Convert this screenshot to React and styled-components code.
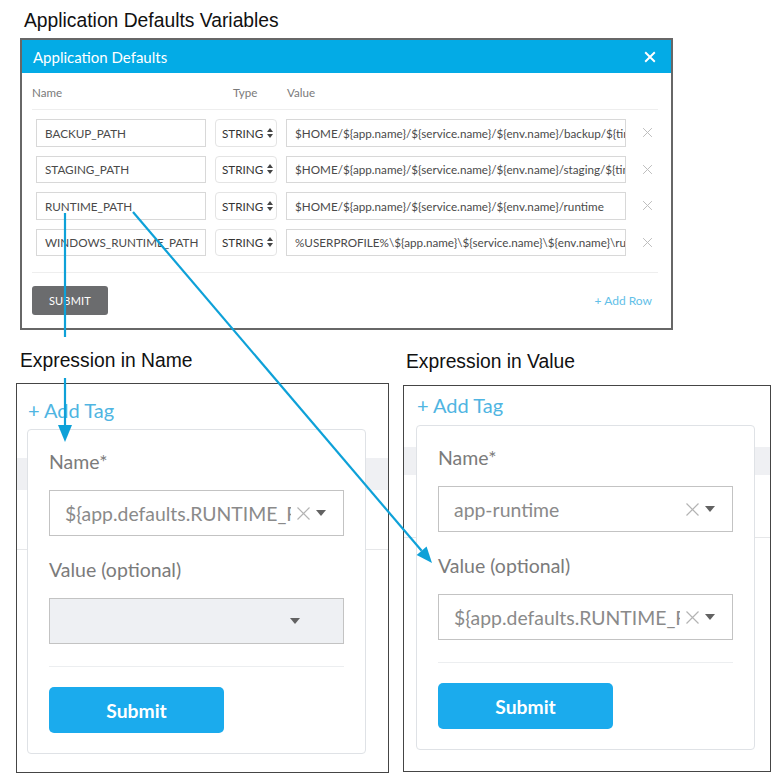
import React from 'react';
import styled, { createGlobalStyle } from 'styled-components';

const GlobalStyle = createGlobalStyle`
  body {
    margin: 0;
    background: #fff;
  }
`;

const ui = `'Lato', 'Open Sans', sans-serif`;
const blue = '#0ea1d8';

const Page = styled.div`
  position: relative;
  width: 777px;
  height: 778px;
  padding-top: 10px;
  box-sizing: border-box;
  font-family: 'Liberation Sans', Arial, sans-serif;
  overflow: hidden;
`;

const Caption = styled.div`
  font-size: 19.3px;
  line-height: 22px;
  color: #111;
  margin-left: ${(p) => p.$indent}px;
  margin-top: ${(p) => p.$top || 0}px;
`;

/* ---------- top dialog ---------- */

const Dialog = styled.div`
  margin: 6px 0 0 20px;
  width: 653px;
  height: 292px;
  box-sizing: border-box;
  border: 2px solid #676767;
  font-family: ${ui};
  background: #fff;
`;

const DialogHeader = styled.div`
  height: 33px;
  background: #03abe6;
  display: flex;
  align-items: center;
  justify-content: space-between;
  padding: 0 15px 0 11px;
  color: #fff;
  font-size: 15px;
`;

const DialogBody = styled.div`
  padding: 0 13px 0 10px;
`;

const HeadRow = styled.div`
  display: grid;
  grid-template-columns: 201px 54px 1fr;
  height: 37px;
  align-items: center;
  padding-top: 2px;
  box-sizing: border-box;
  border-bottom: 1px solid #eeeeee;
  font-size: 11.6px;
  color: #7a7a7a;
`;

const Rows = styled.div`
  display: flex;
  flex-direction: column;
  gap: 9px;
  padding: 9px 0 16px 4px;
  border-bottom: 1px solid #eeeeee;
`;

const Row = styled.div`
  display: flex;
  align-items: center;
  gap: 9px;
  height: 27.5px;
`;

const Field = styled.div`
  width: ${(p) => p.$w}px;
  height: 100%;
  box-sizing: border-box;
  border: 1px solid #d8d8d8;
  display: flex;
  align-items: center;
  padding-left: 8px;
  font-size: 11.7px;
  color: #4a4a4a;
  white-space: nowrap;
  overflow: hidden;
`;

const TypeSelect = styled(Field)`
  border-color: #e4e4e4;
  border-radius: 4px;
  padding-left: 6px;
  gap: 4px;
  color: #333;
`;

const RemoveBtn = styled.span`
  margin-left: 7px;
  display: flex;
  color: #b9b9b9;
`;

const DialogFooter = styled.div`
  display: flex;
  align-items: center;
  justify-content: space-between;
  padding: 13px 6px 0 0;
`;

const DarkButton = styled.button`
  width: 76px;
  height: 29px;
  border: none;
  border-radius: 3px;
  background: #6b6c6e;
  color: #fff;
  font-family: ${ui};
  font-size: 11px;
  letter-spacing: 0.2px;
`;

const LinkText = styled.span`
  color: ${(p) => (p.$strong ? '#4fb5e2' : '#62c0e8')};
  font-size: ${(p) => p.$size}px;
  line-height: 22px;
`;

/* ---------- bottom panels ---------- */

const Bottom = styled.div`
  display: flex;
  align-items: flex-start;
  margin-top: 20px;
`;

const Column = styled.div`
  margin-left: ${(p) => p.$left}px;
  width: ${(p) => p.$w}px;
`;

const Frame = styled.div`
  margin-top: ${(p) => p.$top}px;
  height: ${(p) => p.$h}px;
  box-sizing: border-box;
  border: 1px solid #454545;
  padding: ${(p) => p.$padTop}px 0 0 ${(p) => p.$padLeft}px;
  font-family: ${ui};
  background: linear-gradient(
    to bottom,
    #fff 0 ${(p) => p.$band[0]}px,
    #eff0f3 ${(p) => p.$band[0]}px ${(p) => p.$band[1]}px,
    #fff ${(p) => p.$band[1]}px ${(p) => p.$band[2]}px,
    #e6e7e9 ${(p) => p.$band[2]}px ${(p) => p.$band[2] + 1}px,
    #fff ${(p) => p.$band[2] + 1}px
  );
`;

const AddTag = styled.div`
  margin-left: 1px;
`;

const Card = styled.div`
  margin-top: ${(p) => p.$top}px;
  width: 339px;
  box-sizing: border-box;
  border: 1px solid #dfe2e6;
  border-radius: 4px;
  background: #fff;
  padding: 21px 21px 20px 21px;
  display: flex;
  flex-direction: column;
`;

const Label = styled.div`
  font-size: 19.5px;
  line-height: 22px;
  color: #7b7b7b;
  margin-top: ${(p) => p.$top || 0}px;
  margin-bottom: 17px;
`;

const Select = styled.div`
  height: 46px;
  box-sizing: border-box;
  border: 1px solid #c3c3c3;
  background: ${(p) => (p.$empty ? '#eef0f3' : '#fff')};
  display: flex;
  align-items: center;
  padding: 0 ${(p) => (p.$empty ? 43 : 17)}px 0 15px;
`;

const SelectValue = styled.div`
  flex: 1;
  min-width: 0;
  overflow: hidden;
  white-space: nowrap;
  font-size: 19.4px;
  color: #8a8a8a;
`;

const ClearIcon = styled.span`
  display: flex;
  margin: 0 5px 0 5px;
`;

const Divider = styled.div`
  margin-top: 22px;
  border-top: 1px solid #eceef0;
`;

const PrimaryButton = styled.button`
  margin-top: 20px;
  width: 175px;
  height: 46px;
  border: none;
  border-radius: 5px;
  background: #1babed;
  color: #fff;
  font-family: ${ui};
  font-size: 19.3px;
  font-weight: 700;
`;

const Overlay = styled.svg`
  position: absolute;
  left: 0;
  top: 0;
  pointer-events: none;
`;

const Cross = ({ size, color, width = 1.2 }) => (
  <svg width={size} height={size} viewBox="0 0 10 10">
    <path d="M1 1 L9 9 M9 1 L1 9" stroke={color} strokeWidth={width} fill="none" />
  </svg>
);

const Caret = () => (
  <svg width="10" height="6" viewBox="0 0 10 6">
    <path d="M0 0 H10 L5 6 Z" fill="#626262" />
  </svg>
);

const UpDown = () => (
  <svg width="6" height="10" viewBox="0 0 6 10">
    <path d="M3 0 L6 4 H0 Z M0 6 H6 L3 10 Z" fill="#444" />
  </svg>
);

const variables = [
  ['BACKUP_PATH', '$HOME/${app.name}/${service.name}/${env.name}/backup/${timestamp}'],
  ['STAGING_PATH', '$HOME/${app.name}/${service.name}/${env.name}/staging/${timestamp}'],
  ['RUNTIME_PATH', '$HOME/${app.name}/${service.name}/${env.name}/runtime'],
  ['WINDOWS_RUNTIME_PATH', '%USERPROFILE%\\${app.name}\\${service.name}\\${env.name}\\runtime'],
];

const expr = '${app.defaults.RUNTIME_PATH}';

const TagSelect = ({ value, empty }) => (
  <Select $empty={empty}>
    <SelectValue>{value}</SelectValue>
    {!empty && (
      <ClearIcon>
        <Cross size={15} color="#b4b4b4" width={0.8} />
      </ClearIcon>
    )}
    <Caret />
  </Select>
);

const TagCard = ({ top, name, value }) => (
  <Card $top={top}>
    <Label>Name*</Label>
    <TagSelect value={name} />
    <Label $top={23}>Value (optional)</Label>
    <TagSelect value={value} empty={!value} />
    <Divider />
    <PrimaryButton>Submit</PrimaryButton>
  </Card>
);

const App = () => {
  const a = { x: 133, y: 212 };
  const tip = { x: 432, y: 563 };
  const dx = tip.x - a.x;
  const dy = tip.y - a.y;
  const len = Math.hypot(dx, dy);
  const ux = dx / len;
  const uy = dy / len;
  const bx = tip.x - 16 * ux;
  const by = tip.y - 16 * uy;
  const head = `${tip.x},${tip.y} ${bx - 6.5 * uy},${by + 6.5 * ux} ${bx + 6.5 * uy},${by - 6.5 * ux}`;

  return (
    <Page>
      <GlobalStyle />
      <Caption $indent={24}>Application Defaults Variables</Caption>
      <Dialog>
        <DialogHeader>
          <span>Application Defaults</span>
          <Cross size={12} color="#fff" width={1.6} />
        </DialogHeader>
        <DialogBody>
          <HeadRow>
            <span>Name</span>
            <span>Type</span>
            <span>Value</span>
          </HeadRow>
          <Rows>
            {variables.map(([name, value]) => (
              <Row key={name}>
                <Field $w={170}>{name}</Field>
                <TypeSelect $w={62}>
                  STRING <UpDown />
                </TypeSelect>
                <Field $w={340}>{value}</Field>
                <RemoveBtn>
                  <Cross size={11} color="#bdbdbd" width={0.9} />
                </RemoveBtn>
              </Row>
            ))}
          </Rows>
          <DialogFooter>
            <DarkButton>SUBMIT</DarkButton>
            <LinkText $size={12}>+ Add Row</LinkText>
          </DialogFooter>
        </DialogBody>
      </Dialog>

      <Bottom>
        <Column $left={16} $w={373}>
          <Caption $indent={4}>Expression in Name</Caption>
          <Frame $top={11} $h={390} $padTop={15} $padLeft={10} $band={[74, 106, 165]}>
            <AddTag>
              <LinkText $size={20} $strong>+ Add Tag</LinkText>
            </AddTag>
            <TagCard top={8} name={expr} value="" />
          </Frame>
        </Column>
        <Column $left={14} $w={368}>
          <Caption $indent={3} $top={1}>Expression in Value</Caption>
          <Frame $top={12} $h={387} $padTop={8} $padLeft={12} $band={[61, 89, 151]}>
            <AddTag>
              <LinkText $size={20} $strong>+ Add Tag</LinkText>
            </AddTag>
            <TagCard top={9} name="app-runtime" value={expr} />
          </Frame>
        </Column>
      </Bottom>

      <Overlay width="777" height="778" viewBox="0 0 777 778">
        <g stroke={blue} strokeWidth="2.2" fill="none">
          <line x1="65" y1="213" x2="65" y2="337" />
          <line x1="65" y1="378" x2="65" y2="428" />
          <line x1={a.x} y1={a.y} x2={bx} y2={by} />
        </g>
        <polygon points="58,425 72,425 65,442" fill={blue} />
        <polygon points={head} fill={blue} />
      </Overlay>
    </Page>
  );
};

export default App;
